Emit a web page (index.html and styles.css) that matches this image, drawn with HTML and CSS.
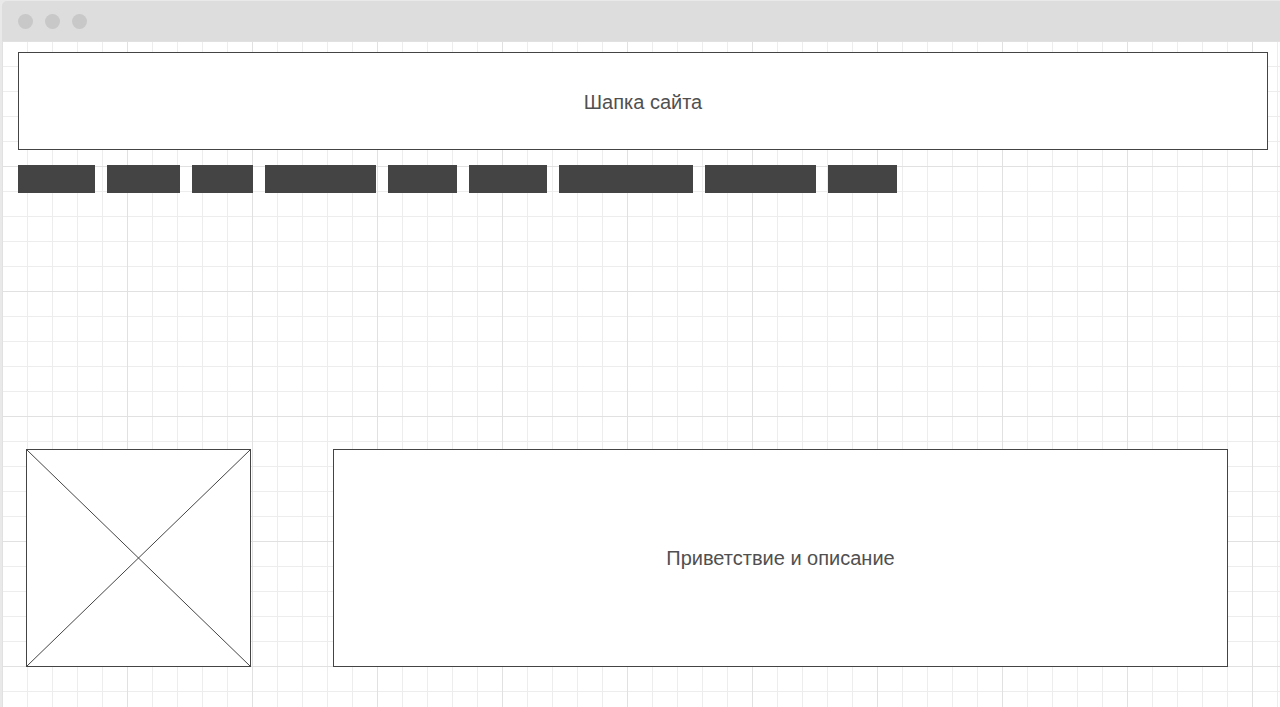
FILE: index.html
```html
<!DOCTYPE html>
<html lang="ru">
<head>
<meta charset="utf-8">
<title>Wireframe</title>
<link rel="stylesheet" href="styles.css">
</head>
<body>
<div class="window">
  <div class="titlebar">
    <span class="dot"></span>
    <span class="dot"></span>
    <span class="dot"></span>
  </div>
  <div class="canvas">
    <header class="site-header">Шапка сайта</header>
    <nav class="nav">
      <span class="nav-item" style="width:77px"></span>
      <span class="nav-item" style="width:73px"></span>
      <span class="nav-item" style="width:61px"></span>
      <span class="nav-item" style="width:111px"></span>
      <span class="nav-item" style="width:69px"></span>
      <span class="nav-item" style="width:78px"></span>
      <span class="nav-item" style="width:134px"></span>
      <span class="nav-item" style="width:111px"></span>
      <span class="nav-item" style="width:69px"></span>
    </nav>
    <section class="hero">
      <div class="image-placeholder">
        <svg class="cross" viewBox="0 0 100 100" preserveAspectRatio="none">
          <line x1="0" y1="0" x2="100" y2="100" vector-effect="non-scaling-stroke"/>
          <line x1="100" y1="0" x2="0" y2="100" vector-effect="non-scaling-stroke"/>
        </svg>
      </div>
      <div class="welcome">Приветствие и описание</div>
    </section>
  </div>
</div>
</body>
</html>
```
FILE: styles.css
```css
html, body {
  margin: 0;
  padding: 0;
  height: 707px;
  overflow: hidden;
}
body {
  background: #e9e9e9;
  font-family: "Liberation Sans", Arial, sans-serif;
}
.window {
  margin: 1px 0 0 2px;
  height: 706px;
  display: flex;
  flex-direction: column;
}
.titlebar {
  height: 40px;
  flex: none;
  background: #dddddd;
  border-radius: 5px 0 0 0;
  display: flex;
  align-items: center;
  gap: 12px;
  padding-left: 16px;
}
.dot {
  width: 15px;
  height: 15px;
  border-radius: 50%;
  background: #c8c8c8;
}
.canvas {
  flex: 1;
  background-color: #ffffff;
  background-image:
    linear-gradient(to right, #e1e1e1 1px, transparent 1px),
    linear-gradient(to bottom, #e1e1e1 1px, transparent 1px),
    linear-gradient(to right, #ededed 1px, transparent 1px),
    linear-gradient(to bottom, #ededed 1px, transparent 1px);
  background-size: 125px 125px, 125px 125px, 25px 25px, 25px 25px;
  padding: 11px 0 0 16px;
  box-sizing: border-box;
}
.site-header {
  width: 1250px;
  height: 98px;
  box-sizing: border-box;
  border: 1px solid #444;
  background: #fff;
  display: flex;
  align-items: center;
  justify-content: center;
  padding-top: 3px;
  font-size: 20px;
  color: #505050;
}
.nav {
  display: flex;
  gap: 12px;
  margin-top: 15px;
  height: 28px;
}
.nav-item {
  display: block;
  height: 28px;
  background: #444444;
}
.hero {
  display: flex;
  margin: 256px 0 0 8px;
  gap: 82px;
}
.image-placeholder {
  width: 225px;
  height: 218px;
  box-sizing: border-box;
  border: 1px solid #444;
  background: #fff;
}
.cross {
  display: block;
  width: 100%;
  height: 100%;
}
.cross line {
  stroke: #444;
  stroke-width: 1;
}
.welcome {
  width: 895px;
  height: 218px;
  box-sizing: border-box;
  border: 1px solid #444;
  background: #fff;
  display: flex;
  align-items: center;
  justify-content: center;
  padding-top: 1px;
  font-size: 20px;
  color: #505050;
}
```
